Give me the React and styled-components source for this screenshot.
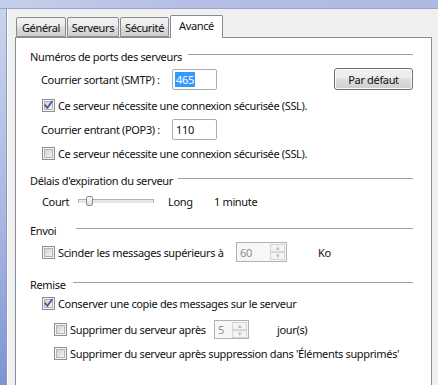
import React from "react";
import styled, { createGlobalStyle } from "styled-components";

const GlobalStyle = createGlobalStyle`
  html, body {
    margin: 0;
    padding: 0;
    background: #f0f0f0;
  }
  body {
    font-family: "Noto Sans", "Open Sans", sans-serif;
    font-size: 11px;
    letter-spacing: -0.35px;
    color: #111;
  }
`;

const Window = styled.div`
  width: 438px;
  height: 385px;
  overflow: hidden;
  display: flex;
  flex-direction: column;
  background: #f0f0f0;
`;

const TitleBar = styled.div`
  height: 8px;
  flex: none;
  background: linear-gradient(to right, #c6cfe9, #b6bfe6 40%, #aeb8e2);
  border-bottom: 1px solid #9aa5cc;
`;

const Body = styled.div`
  flex: 1;
  display: flex;
  min-height: 0;
`;

const Frame = styled.div`
  width: 6px;
  flex: none;
  background: linear-gradient(to bottom, #c9d3ec, #a9b8e2 55%, #7f93d3 100%);
  border-right: 1px solid #8c99bd;
`;

const Dialog = styled.div`
  flex: 1;
  display: flex;
  flex-direction: column;
  padding: 6px 7px 0 7px;
  border-left: 1px solid #ffffff;
  min-width: 0;
`;

const TabStrip = styled.div`
  display: flex;
  align-items: flex-end;
  height: 22px;
  padding-left: 1px;
  position: relative;
  z-index: 1;
`;

const Tab = styled.div`
  box-sizing: border-box;
  width: ${(p) => p.$w}px;
  height: ${(p) => (p.$active ? 23 : 20)}px;
  margin-bottom: ${(p) => (p.$active ? -1 : 0)}px;
  margin-right: ${(p) => (p.$active ? 0 : 1)}px;
  border: 1px solid #898c95;
  border-bottom: ${(p) => (p.$active ? "none" : "1px solid #898c95")};
  border-radius: 2px 2px 0 0;
  background: ${(p) =>
    p.$active
      ? "#ffffff"
      : "linear-gradient(to bottom, #f2f2f2 0%, #ebebeb 45%, #dddddd 50%, #cfcfcf 100%)"};
  display: flex;
  align-items: center;
  justify-content: center;
  padding-bottom: ${(p) => (p.$active ? 3 : 0)}px;
  white-space: nowrap;
`;

const Panel = styled.div`
  flex: 1;
  box-sizing: border-box;
  width: 417px;
  background: #ffffff;
  border: 1px solid #898c95;
  border-bottom: none;
  padding: 10px 18px 0 14px;
  display: flex;
  flex-direction: column;
`;

const Header = styled.div`
  display: flex;
  align-items: center;
  height: 16px;
  margin-top: ${(p) => p.$top || 0}px;
`;

const HeaderLabel = styled.span`
  width: ${(p) => p.$w}px;
  flex: none;
  white-space: nowrap;
`;

const Rule = styled.div`
  flex: 1;
  height: 1px;
  background: #a0a0a0;
  border-bottom: 1px solid #ffffff;
  margin-top: -2px;
`;

const Row = styled.div`
  display: flex;
  align-items: center;
  height: ${(p) => p.$h || 16}px;
  margin-top: ${(p) => p.$top || 0}px;
  padding-left: ${(p) => p.$indent || 0}px;
`;

const FieldLabel = styled.span`
  width: ${(p) => p.$w}px;
  flex: none;
  white-space: nowrap;
`;

const TextBox = styled.div`
  box-sizing: border-box;
  width: 45px;
  height: 21px;
  border: 1px solid #abadb3;
  border-top-color: #abadb3;
  border-radius: 2px;
  background: #fff;
  display: flex;
  align-items: center;
  padding-left: 2px;
`;

const Selected = styled.span`
  background: #3399ff;
  color: #fff;
  padding: 0 1px;
  line-height: 15px;
`;

const Button = styled.button`
  margin-left: auto;
  box-sizing: border-box;
  width: 79px;
  height: 22px;
  border: 1px solid #707070;
  border-radius: 3px;
  background: linear-gradient(to bottom, #f2f2f2 0%, #ebebeb 45%, #dddddd 50%, #cfcfcf 100%);
  box-shadow: inset 0 0 0 1px #fbfbfb;
  font: inherit;
  letter-spacing: inherit;
  color: #111;
  padding: 0;
`;

const CheckText = styled.span`
  margin-left: 3px;
  white-space: nowrap;
  width: ${(p) => (p.$w ? `${p.$w}px` : "auto")};
  flex: none;
`;

const CheckBoxSvg = styled.svg`
  flex: none;
  display: block;
`;

function CheckBox({ checked }) {
  return (
    <CheckBoxSvg width="13" height="13" viewBox="0 0 13 13">
      <defs>
        <linearGradient id="cbg" x1="0" y1="0" x2="1" y2="1">
          <stop offset="0" stopColor="#cbcfd5" />
          <stop offset="1" stopColor="#f7f7f7" />
        </linearGradient>
      </defs>
      <rect x="0.5" y="0.5" width="12" height="12" fill="#f4f4f4" stroke="#8e8f8f" />
      <rect x="2.5" y="2.5" width="8" height="8" fill="url(#cbg)" stroke="#b0b4ba" />
      {checked && (
        <path
          d="M3.2 6.4 L5.4 8.8 L9.8 2.8"
          fill="none"
          stroke="#4a5f97"
          strokeWidth="1.9"
          strokeLinecap="square"
        />
      )}
    </CheckBoxSvg>
  );
}

const SliderLabel = styled.span`
  width: ${(p) => p.$w}px;
  flex: none;
  white-space: nowrap;
`;

const Track = styled.div`
  position: relative;
  width: 76px;
  height: 20px;
  flex: none;
  margin-right: 14px;
  &::before {
    content: "";
    position: absolute;
    left: 0;
    right: 0;
    top: 8px;
    height: 2px;
    background: #e7eaea;
    border: 1px solid #b0b0b0;
    border-bottom-color: #e3e3e3;
    border-radius: 1px;
  }
`;

const Thumb = styled.div`
  position: absolute;
  left: 8px;
  top: 5px;
  width: 7px;
  height: 10px;
  box-sizing: border-box;
  border: 1px solid #8b8b8b;
  border-radius: 2px;
  background: linear-gradient(to bottom, #fbfbfb, #dcdcdc);
`;

const Spinner = styled.div`
  box-sizing: border-box;
  width: ${(p) => p.$w}px;
  height: ${(p) => p.$h}px;
  border: 1px solid #adb2b5;
  background: #f7f7f7;
  display: flex;
  align-items: center;
  flex: none;
`;

const SpinValue = styled.span`
  flex: 1;
  color: #8d8d8d;
  padding-left: 3px;
`;

const SpinButtons = styled.div`
  width: 15px;
  align-self: stretch;
  display: flex;
  flex-direction: column;
  margin: 1px;
`;

const SpinBtn = styled.div`
  flex: 1;
  box-sizing: border-box;
  border: 1px solid #d5d5d5;
  background: #f4f4f4;
  display: flex;
  align-items: center;
  justify-content: center;
  font-size: 6px;
  color: #bdbdbd;
  line-height: 1;
`;

const Unit = styled.span`
  margin-left: ${(p) => p.$gap}px;
`;

export default function App() {
  return (
    <Window>
      <GlobalStyle />
      <TitleBar />
      <Body>
        <Frame />
        <Dialog>
          <TabStrip>
            <Tab $w={50}>Général</Tab>
            <Tab $w={52}>Serveurs</Tab>
            <Tab $w={49}>Sécurité</Tab>
            <Tab $w={53} $active>
              Avancé
            </Tab>
          </TabStrip>
          <Panel>
            <Header>
              <HeaderLabel $w={158}>Numéros de ports des serveurs</HeaderLabel>
              <Rule />
            </Header>

            <Row $h={22} $top={4} $indent={11}>
              <FieldLabel $w={131}>Courrier sortant (SMTP) :</FieldLabel>
              <TextBox>
                <Selected>465</Selected>
              </TextBox>
              <Button>Par défaut</Button>
            </Row>

            <Row $top={7} $indent={12}>
              <CheckBox checked />
              <CheckText>Ce serveur nécessite une connexion sécurisée (SSL).</CheckText>
            </Row>

            <Row $h={22} $top={5} $indent={11}>
              <FieldLabel $w={131}>Courrier entrant (POP3) :</FieldLabel>
              <TextBox>
                <span style={{ paddingLeft: 1 }}>110</span>
              </TextBox>
            </Row>

            <Row $top={5} $indent={12}>
              <CheckBox />
              <CheckText>Ce serveur nécessite une connexion sécurisée (SSL).</CheckText>
            </Row>

            <Header $top={11}>
              <HeaderLabel $w={148}>Délais d'expiration du serveur</HeaderLabel>
              <Rule />
            </Header>

            <Row $h={20} $top={3} $indent={12}>
              <SliderLabel $w={36}>Court</SliderLabel>
              <Track>
                <Thumb />
              </Track>
              <SliderLabel $w={46}>Long</SliderLabel>
              <span>1 minute</span>
            </Row>

            <Header $top={11}>
              <HeaderLabel $w={46}>Envoi</HeaderLabel>
              <Rule />
            </Header>

            <Row $h={22} $top={3} $indent={12}>
              <CheckBox />
              <CheckText $w={178}>Scinder les messages supérieurs à</CheckText>
              <Spinner $w={51} $h={20}>
                <SpinValue>60</SpinValue>
                <SpinButtons>
                  <SpinBtn>▲</SpinBtn>
                  <SpinBtn>▼</SpinBtn>
                </SpinButtons>
              </Spinner>
              <Unit $gap={31}>Ko</Unit>
            </Row>

            <Header $top={13}>
              <HeaderLabel $w={43}>Remise</HeaderLabel>
              <Rule />
            </Header>

            <Row $top={3} $indent={12}>
              <CheckBox checked />
              <CheckText>Conserver une copie des messages sur le serveur</CheckText>
            </Row>

            <Row $h={20} $top={8} $indent={24}>
              <CheckBox />
              <CheckText $w={144}>Supprimer du serveur après</CheckText>
              <Spinner $w={35} $h={19}>
                <SpinValue>5</SpinValue>
                <SpinButtons>
                  <SpinBtn>▲</SpinBtn>
                  <SpinBtn>▼</SpinBtn>
                </SpinButtons>
              </Spinner>
              <Unit $gap={28}>jour(s)</Unit>
            </Row>

            <Row $top={6} $indent={24}>
              <CheckBox />
              <CheckText>
                Supprimer du serveur après suppression dans 'Éléments supprimés'
              </CheckText>
            </Row>
          </Panel>
        </Dialog>
      </Body>
    </Window>
  );
}
